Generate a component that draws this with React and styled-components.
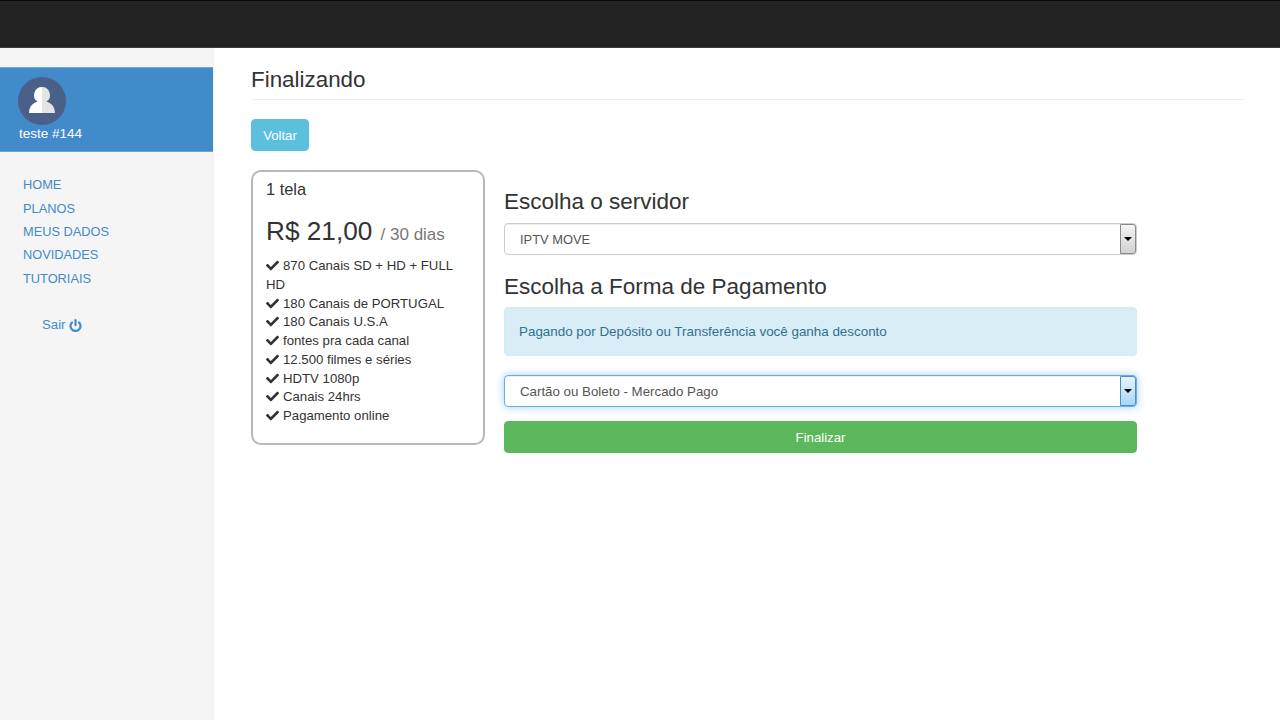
import React from 'react';
import styled, { createGlobalStyle } from 'styled-components';
import { FaCheck } from 'react-icons/fa';

const GlobalStyle = createGlobalStyle`
  html, body {
    margin: 0;
    height: 100%;
    background: #fff;
    color: #333;
    font-family: "Liberation Sans", Arial, sans-serif;
    font-size: 13.2px;
    overflow: hidden;
  }
`;

const Page = styled.div`
  height: 720px;
  display: flex;
  flex-direction: column;
`;

const TopBar = styled.header`
  height: 48px;
  flex: none;
  box-sizing: border-box;
  background: #222;
  border-top: 1px solid #080808;
  border-bottom: 1px solid #3a3a3a;
`;

const Body = styled.div`
  flex: 1;
  display: flex;
  min-height: 0;
`;

const Sidebar = styled.aside`
  width: 213px;
  flex: none;
  background: #f5f5f5;
  border-right: 1px solid #f0f0f0;
  padding-top: 19px;
`;

const Profile = styled.div`
  height: 85px;
  box-sizing: border-box;
  background: #428bca;
  border-top: 1px solid #6aa5d8;
  border-bottom: 1px solid #6aa5d8;
  padding: 9px 0 0 18px;
  color: #fff;
`;

const Avatar = styled.div`
  width: 48px;
  height: 48px;
  border-radius: 50%;
  background: #4a6089;
  display: flex;
  align-items: center;
  justify-content: center;
`;

const UserName = styled.div`
  font-size: 13.5px;
  line-height: 16px;
  margin: 1px 0 0 1px;
`;

const Nav = styled.nav`
  display: flex;
  flex-direction: column;
  padding: 21.4px 0 0 23px;
`;

const NavLink = styled.a`
  height: 23.33px;
  line-height: 23.33px;
  font-size: 12.8px;
  color: #428bca;
  text-decoration: none;
`;

const Logout = styled.a`
  margin: 25px 0 0 19px;
  display: flex;
  align-items: center;
  gap: 4px;
  font-size: 13.2px;
  line-height: 20px;
  color: #428bca;
  text-decoration: none;
`;

const Main = styled.main`
  flex: 1;
  padding: 20px 37px 0;
`;

const PageHeader = styled.div`
  height: 31px;
  border-bottom: 1px solid #eee;
`;

const Title = styled.h1`
  margin: 0;
  font-size: 22.4px;
  font-weight: 400;
  line-height: 24px;
  color: #333;
`;

const BackButton = styled.button`
  display: block;
  margin: 19px 0 19px;
  height: 32px;
  width: 58px;
  padding: 0;
  border: 1px solid #5bc0de;
  border-radius: 4px;
  background: #5bc0de;
  color: #fff;
  font: 13.2px "Liberation Sans", Arial, sans-serif;
`;

const Row = styled.div`
  display: flex;
  align-items: flex-start;
  gap: 19px;
`;

const PlanCard = styled.section`
  width: 234px;
  height: 275px;
  flex: none;
  box-sizing: border-box;
  border: 2px solid #b8b8b8;
  border-radius: 10px;
  padding: 7px 13px 0;
`;

const PlanName = styled.div`
  font-size: 16.4px;
  line-height: 20px;
`;

const Price = styled.div`
  margin-top: 16px;
  font-size: 26.2px;
  line-height: 32px;
  color: #333;
`;

const Period = styled.span`
  font-size: 17px;
  color: #777;
  margin-left: 1px;
`;

const Features = styled.ul`
  list-style: none;
  margin: 6px 0 0;
  padding: 0;
`;

const Feature = styled.li`
  font-size: 13.2px;
  line-height: 18.75px;

  svg {
    width: 13px;
    height: 13px;
    margin-right: 4px;
    vertical-align: -2px;
    color: #333;
  }
`;

const FormColumn = styled.section`
  width: 633px;
  padding-top: 18px;
`;

const Heading = styled.h2`
  margin: 0 0 ${p => p.$gap}px;
  font-size: 22.5px;
  font-weight: 400;
  line-height: 28px;
  color: #333;
`;

const SelectWrap = styled.div`
  position: relative;
  width: 633px;
  height: 32px;
  margin-bottom: ${p => p.$gap}px;
`;

const Select = styled.select`
  appearance: none;
  display: block;
  width: 100%;
  height: 100%;
  box-sizing: border-box;
  padding: 0 20px 0 15px;
  background: #fff;
  color: #555;
  font: ${p => p.$size}px "Liberation Sans", Arial, sans-serif;
  border-radius: 4px;
  outline: none;
  border: 1px solid ${p => (p.$focused ? '#66afe9' : '#ccc')};
  box-shadow: ${p => (p.$focused
    ? 'inset 0 1px 1px rgba(0,0,0,.075), 0 0 8px rgba(102,175,233,.6)'
    : 'inset 0 1px 1px rgba(0,0,0,.075)')};
`;

const SelectArrow = styled.div`
  position: absolute;
  top: 1px;
  right: 1px;
  bottom: 1px;
  width: 16px;
  box-sizing: border-box;
  display: flex;
  align-items: center;
  justify-content: center;
  border-radius: 0 3px 3px 0;
  border: 1px solid ${p => (p.$focused ? '#4a8fc9' : '#8a8a8a')};
  background: ${p => (p.$focused
    ? 'linear-gradient(#e6f3fb, #a9d6f5)'
    : 'linear-gradient(#f4f4f4, #d2d2d2)')};

  &::after {
    content: '';
    border-style: solid;
    border-width: 4px 4px 0;
    border-color: #000 transparent transparent;
  }
`;

const Notice = styled.div`
  width: 633px;
  height: 49px;
  box-sizing: border-box;
  margin-bottom: 19px;
  padding: 0 14px;
  display: flex;
  align-items: center;
  background: #d9edf7;
  border: 1px solid #d3ebf5;
  border-radius: 4px;
  color: #31708f;
  font-size: 13.4px;
`;

const SubmitButton = styled.button`
  display: block;
  width: 633px;
  height: 32px;
  padding: 0;
  border: 1px solid #5cb85c;
  border-radius: 4px;
  background: #5cb85c;
  color: #fff;
  font: 13.2px "Liberation Sans", Arial, sans-serif;
`;

const UserIcon = () => (
  <svg width="28" height="28" viewBox="0 0 28 28" aria-hidden="true">
    <path fill="#fff" d="M14 0a8 8 0 0 0-4.500 14.600C5 16.500 1.500 18.500 1 26h13z" />
    <path fill="#e4e4e4" d="M14 0a8 8 0 0 1 4.500 14.600C23 16.500 26.500 18.500 27 26H14z" />
  </svg>
);

const PowerIcon = () => (
  <svg width="13" height="13" viewBox="0 0 13 13" aria-hidden="true">
    <path fill="none" stroke="currentColor" strokeWidth="2.2" d="M3.700 2.800a5 5 0 1 0 5.600 0" />
    <path fill="none" stroke="currentColor" strokeWidth="2.2" strokeLinecap="round" d="M6.500 1.200v5" />
  </svg>
);

const menu = ['HOME', 'PLANOS', 'MEUS DADOS', 'NOVIDADES', 'TUTORIAIS'];

const features = [
  '870 Canais SD + HD + FULL HD',
  '180 Canais de PORTUGAL',
  '180 Canais U.S.A',
  'fontes pra cada canal',
  '12.500 filmes e séries',
  'HDTV 1080p',
  'Canais 24hrs',
  'Pagamento online',
];

const App = () => (
  <Page>
    <GlobalStyle />
    <TopBar />
    <Body>
      <Sidebar>
        <Profile>
          <Avatar><UserIcon /></Avatar>
          <UserName>teste #144</UserName>
        </Profile>
        <Nav>
          {menu.map(item => <NavLink href="#" key={item}>{item}</NavLink>)}
          <Logout href="#">Sair <PowerIcon /></Logout>
        </Nav>
      </Sidebar>
      <Main>
        <PageHeader><Title>Finalizando</Title></PageHeader>
        <BackButton>Voltar</BackButton>
        <Row>
          <PlanCard>
            <PlanName>1 tela</PlanName>
            <Price>R$ 21,00 <Period>/ 30 dias</Period></Price>
            <Features>
              {features.map(item => <Feature key={item}><FaCheck />{item}</Feature>)}
            </Features>
          </PlanCard>
          <FormColumn>
            <Heading $gap={7}>Escolha o servidor</Heading>
            <SelectWrap $gap={18}>
              <Select $size={12.9} defaultValue="move">
                <option value="move">IPTV MOVE</option>
              </Select>
              <SelectArrow />
            </SelectWrap>
            <Heading $gap={6}>Escolha a Forma de Pagamento</Heading>
            <Notice>Pagando por Depósito ou Transferência você ganha desconto</Notice>
            <SelectWrap $gap={14}>
              <Select $focused $size={13.3} defaultValue="mp">
                <option value="mp">Cartão ou Boleto - Mercado Pago</option>
              </Select>
              <SelectArrow $focused />
            </SelectWrap>
            <SubmitButton>Finalizar</SubmitButton>
          </FormColumn>
        </Row>
      </Main>
    </Body>
  </Page>
);

export default App;
